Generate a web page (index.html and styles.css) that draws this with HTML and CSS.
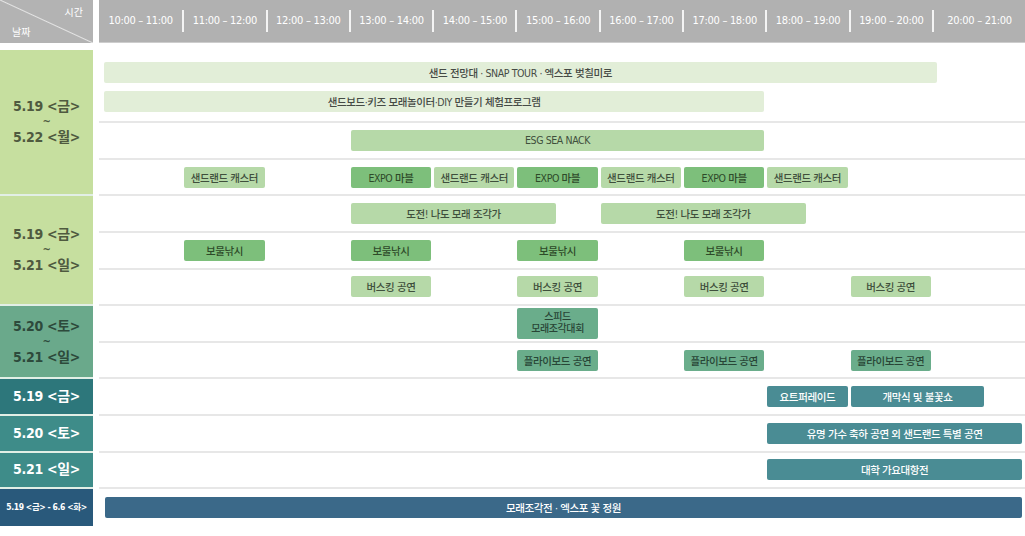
FILE: index.html
```html
<!DOCTYPE html>
<html lang="ko">
  <head>
    <meta charset="UTF-8" />
    <meta name="viewport" content="width=device-width, initial-scale=1.0" />
    <title>행사 시간표</title>
    <link rel="stylesheet" href="styles.css">
  </head>
  <body>
    <div class="header">
      <div class="corner">
        <span class="corner-time">시간</span>
        <span class="corner-date">날짜</span>
      </div>
      <div class="times">
        <div class="time">10:00 – 11:00</div>
        <div class="time">11:00 – 12:00</div>
        <div class="time">12:00 – 13:00</div>
        <div class="time">13:00 – 14:00</div>
        <div class="time">14:00 – 15:00</div>
        <div class="time">15:00 – 16:00</div>
        <div class="time">16:00 – 17:00</div>
        <div class="time">17:00 – 18:00</div>
        <div class="time">18:00 – 19:00</div>
        <div class="time">19:00 – 20:00</div>
        <div class="time">20:00 – 21:00</div>
      </div>
    </div>

    <div class="schedule">
      <!-- 5.19 ~ 5.22 -->
      <div class="day day-light span-4">5.19 &lt;금&gt;<small>~</small>5.22 &lt;월&gt;</div>
      <div class="row no-line">
        <div class="bar pale shift-down long" style="grid-column: 1 / 21">샌드 전망대 · SNAP TOUR · 엑스포 벚칠미로</div>
      </div>
      <div class="row">
        <div class="bar pale shift-up from-start" style="grid-column: 1 / 17">샌드보드·키즈 모래놀이터·DIY 만들기 체험프로그램</div>
      </div>
      <div class="row">
        <div class="bar light" style="grid-column: 7 / 17">ESG SEA NACK</div>
      </div>
      <div class="row">
        <div class="bar light" style="grid-column: 3 / 5">샌드랜드 캐스터</div>
        <div class="bar mid" style="grid-column: 7 / 9">EXPO 마블</div>
        <div class="bar light" style="grid-column: 9 / 11">샌드랜드 캐스터</div>
        <div class="bar mid" style="grid-column: 11 / 13">EXPO 마블</div>
        <div class="bar light" style="grid-column: 13 / 15">샌드랜드 캐스터</div>
        <div class="bar mid" style="grid-column: 15 / 17">EXPO 마블</div>
        <div class="bar light" style="grid-column: 17 / 19">샌드랜드 캐스터</div>
      </div>

      <!-- 5.19 ~ 5.21 -->
      <div class="day day-light span-3">5.19 &lt;금&gt;<small>~</small>5.21 &lt;일&gt;</div>
      <div class="row">
        <div class="bar light" style="grid-column: 7 / 12">도전! 나도 모래 조각가</div>
        <div class="bar light" style="grid-column: 13 / 18">도전! 나도 모래 조각가</div>
      </div>
      <div class="row">
        <div class="bar mid" style="grid-column: 3 / 5">보물낚시</div>
        <div class="bar mid" style="grid-column: 7 / 9">보물낚시</div>
        <div class="bar mid" style="grid-column: 11 / 13">보물낚시</div>
        <div class="bar mid" style="grid-column: 15 / 17">보물낚시</div>
      </div>
      <div class="row">
        <div class="bar light" style="grid-column: 7 / 9">버스킹 공연</div>
        <div class="bar light" style="grid-column: 11 / 13">버스킹 공연</div>
        <div class="bar light" style="grid-column: 15 / 17">버스킹 공연</div>
        <div class="bar light" style="grid-column: 19 / 21">버스킹 공연</div>
      </div>

      <!-- 5.20 ~ 5.21 -->
      <div class="day day-green span-2">5.20 &lt;토&gt;<small>~</small>5.21 &lt;일&gt;</div>
      <div class="row">
        <div class="bar sea tall" style="grid-column: 11 / 13">스피드<br>모래조각대회</div>
      </div>
      <div class="row">
        <div class="bar sea" style="grid-column: 11 / 13">플라이보드 공연</div>
        <div class="bar sea" style="grid-column: 15 / 17">플라이보드 공연</div>
        <div class="bar sea" style="grid-column: 19 / 21">플라이보드 공연</div>
      </div>

      <!-- 하루 일정 -->
      <div class="day day-dark">5.19 &lt;금&gt;</div>
      <div class="row">
        <div class="bar teal" style="grid-column: 17 / 19">요트퍼레이드</div>
        <div class="bar teal stretch" style="grid-column: 19 / 22">개막식 및 불꽃쇼</div>
      </div>
      <div class="day day-teal">5.20 &lt;토&gt;</div>
      <div class="row">
        <div class="bar teal to-end" style="grid-column: 17 / -1">유명 가수 축하 공연 외 샌드랜드 특별 공연</div>
      </div>
      <div class="day day-teal">5.21 &lt;일&gt;</div>
      <div class="row">
        <div class="bar teal to-end" style="grid-column: 17 / -1">대학 가요대항전</div>
      </div>

      <div class="day day-blue no-line">5.19 &lt;금&gt; - 6.6 &lt;화&gt;</div>
      <div class="row no-line">
        <div class="bar blue wide" style="grid-column: 1 / -1">모래조각전 · 엑스포 꽃 정원</div>
      </div>
    </div>
  </body>
</html>
```

FILE: styles.css
```css
* {
  margin: 0;
  padding: 0;
  box-sizing: border-box;
}

body {
  width: 1025px;
  height: 536px;
  overflow: hidden;
  background: #fff;
  font-family: "DejaVu Sans Condensed", "Noto Sans CJK KR", sans-serif;
}

/* 상단 시간 줄 */
.header {
  display: flex;
  height: 43px;
}

.corner {
  width: 93px;
  display: flex;
  flex-direction: column;
  justify-content: space-between;
  padding: 4px 10px 4px 12px;
  color: #fff;
  font-family: "Noto Sans CJK KR", sans-serif;
  font-size: 10px;
  background: linear-gradient(
      to top right,
      transparent calc(50% - 1px),
      #e4e4e4 50%,
      transparent calc(50% + 1px)
    ),
    #b3b3b3;
}

.corner-time {
  align-self: flex-end;
}

.corner-date {
  align-self: flex-start;
}

.times {
  flex: 1;
  margin-left: 6px;
  display: grid;
  grid-template-columns: repeat(10, 83.3px) 1fr;
  align-items: center;
  background: #b1b1b1;
  border-bottom: 1px solid #cdcdcd;
}

.time {
  height: 22px;
  line-height: 22px;
  text-align: center;
  color: #fff;
  font-size: 11px;
  letter-spacing: -0.3px;
}

.time + .time {
  border-left: 2px solid #f4f4f4;
}

/* 일정표 */
.schedule {
  margin-top: 7px;
  display: grid;
  grid-template-columns: 93px 1fr;
  grid-auto-rows: 36.6px;
  column-gap: 6px;
}

.day {
  grid-column: 1;
  display: flex;
  flex-direction: column;
  align-items: center;
  justify-content: center;
  font-weight: bold;
  font-size: 14px;
  line-height: 19px;
  letter-spacing: -0.3px;
  border-bottom: 2px solid #e2efe6;
}

.day small {
  font-size: 11px;
  line-height: 12px;
}

.span-4 { grid-row: span 4; }
.span-3 { grid-row: span 3; }
.span-2 { grid-row: span 2; }

.day-light {
  background: #c6df9f;
  color: #4f5a3f;
}

.day-green {
  background: #6aa98b;
  color: #2d4a3b;
}

.day-dark {
  background: #2d777b;
  color: #fff;
}

.day-teal {
  background: #3e8c89;
  color: #fff;
}

.day-blue {
  background: #29597b;
  color: #fff;
  font-size: 8.5px;
  letter-spacing: -0.4px;
}

.row {
  grid-column: 2;
  display: grid;
  grid-template-columns: repeat(22, 41.65px) 1fr;
  align-items: center;
  border-bottom: 2px solid #e7e7e7;
}

.no-line {
  border-bottom: none;
}

/* 막대 */
.bar {
  height: 21px;
  margin: 0 1px 0 2px;
  display: flex;
  align-items: center;
  justify-content: center;
  text-align: center;
  border-radius: 2px;
  font-size: 10.5px;
  font-weight: 500;
  letter-spacing: -0.4px;
  color: #454a45;
  white-space: nowrap;
}

.shift-down {
  margin-top: 8px;
}

.shift-up {
  margin-bottom: 4px;
}

.long {
  margin-left: 5px;
  margin-right: -5px;
}

.from-start {
  margin-left: 5px;
}

.pale {
  background: #e2eed8;
}

.light {
  background: #b6d9a8;
  color: #3f4f3c;
}

.mid {
  background: #7dbf7b;
  color: #2e4a29;
}

.sea {
  background: #6aad8b;
  color: #284536;
}

.tall {
  height: 31px;
  line-height: 12px;
  font-size: 10px;
}

.teal {
  background: #4a8c94;
  color: #fff;
}

.stretch {
  margin-right: -11px;
}

.to-end {
  margin-right: 3px;
}

.blue {
  background: #3b6989;
  color: #fff;
}

.wide {
  margin-left: 6px;
  margin-right: 3px;
}
```
